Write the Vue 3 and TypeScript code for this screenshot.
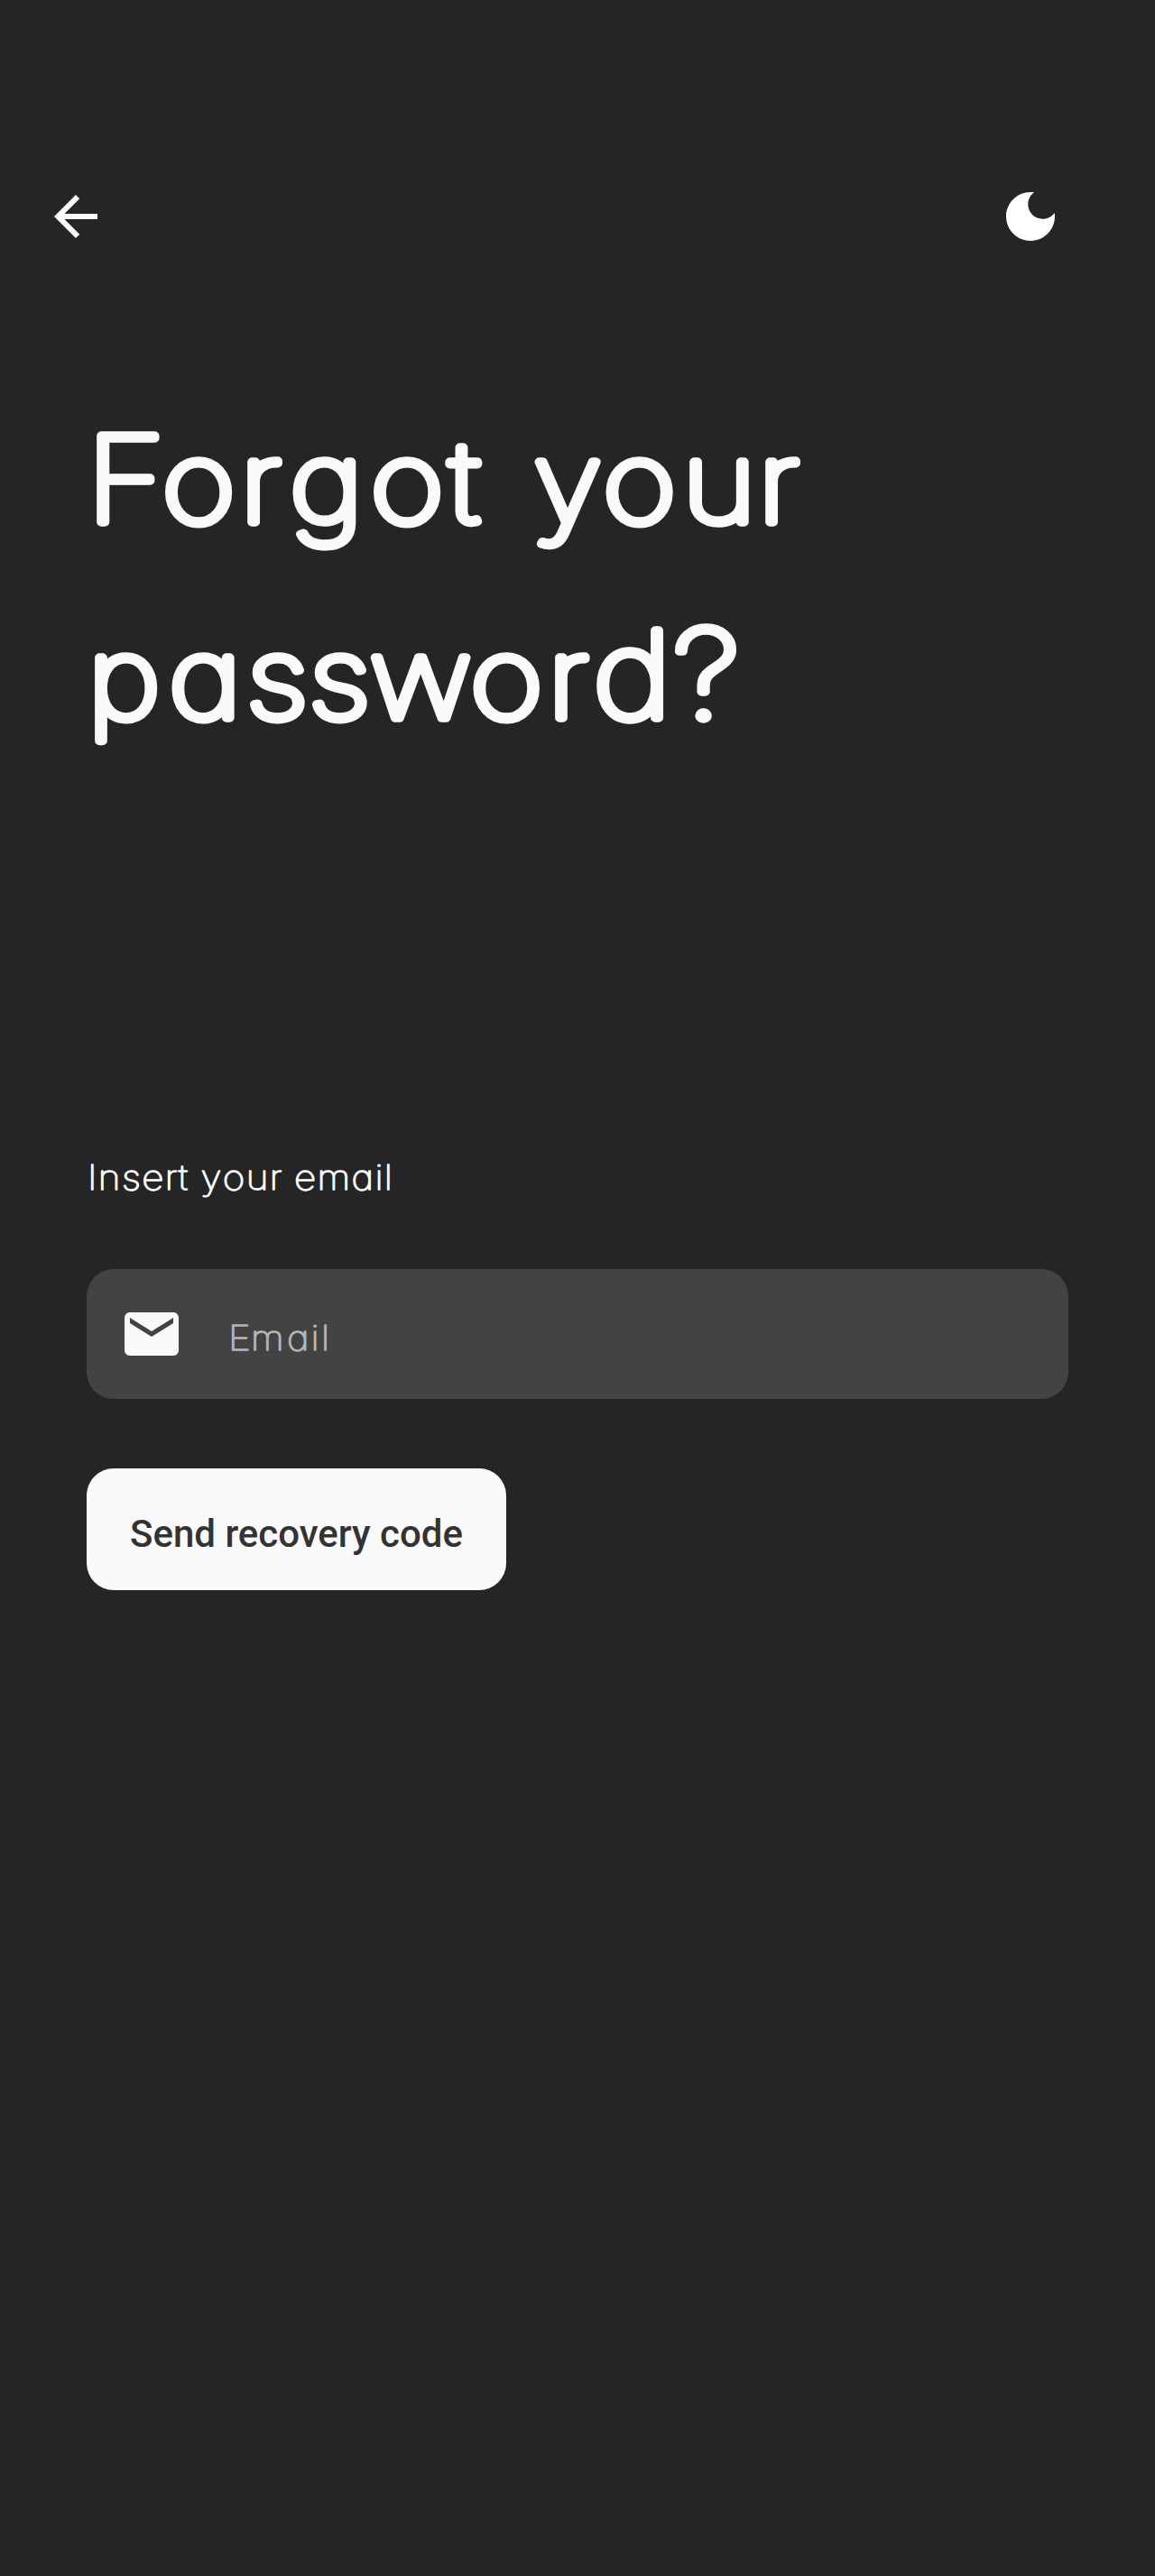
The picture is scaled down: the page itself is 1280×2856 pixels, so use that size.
<script setup lang="ts">
interface Run { text: string; size: number; xs: number[] }
interface Line { scale: number; y: number; runs: Run[] }
interface Word { text: string; x: number; width: number }

const titleLines: Line[] = [
  {
    scale: 1.14,
    y: 579,
    runs: [
      { text: 'F', size: 132, xs: [95.5] },
      { text: 'orgot your', size: 123, xs: [179.5, 266, 321, 410.5, 498, 550, 591, 668, 756, 840] },
    ],
  },
  {
    scale: 1.13,
    y: 796,
    runs: [
      { text: 'passwor', size: 123, xs: [97, 187, 273, 342, 410, 521, 607] },
      { text: 'd', size: 133, xs: [657] },
      { text: '?', size: 136, xs: [746] },
    ],
  },
]

const labelScale = 1.12
const labelWords: Word[] = [
  { text: 'Insert', x: 97, width: 111 },
  { text: 'your', x: 222.5, width: 90 },
  { text: 'email', x: 326, width: 109 },
]
const hintXs = [253, 278, 318, 344.5, 356]

const place = (xs: number[], scale: number): string =>
  xs.map((x) => (x / scale).toFixed(2)).join(' ')
const stretch = (scale: number): string => `scale(${scale} 1)`
</script>

<template>
  <main class="screen">
    <header class="bar">
      <svg class="icon" viewBox="0 0 24 24"><path d="M20 11H7.83l5.59-5.59L12 4l-8 8 8 8 1.41-1.41L7.83 13H20v-2z" /></svg>
      <svg class="icon moon" viewBox="0 0 24 24"><path d="M12 3c-4.97 0-9 4.03-9 9s4.03 9 9 9 9-4.03 9-9c0-.46-.04-.92-.1-1.36-.98 1.37-2.58 2.26-4.4 2.26-2.98 0-5.4-2.42-5.4-5.4 0-1.81.89-3.42 2.26-4.4C12.92 3.04 12.46 3 12 3z" /></svg>
    </header>
    <h1 class="title">
      <svg width="1280" height="440" viewBox="0 420 1280 440">
        <text v-for="l in titleLines" :key="l.y" class="rounded big" :transform="stretch(l.scale)" :y="l.y"><tspan v-for="r in l.runs" :key="r.text" :font-size="r.size" :x="place(r.xs, l.scale)">{{ r.text }}</tspan></text>
      </svg>
    </h1>
    <div class="label">
      <svg width="1280" height="80" viewBox="0 1270 1280 80">
        <text v-for="w in labelWords" :key="w.text" class="rounded small" :transform="stretch(labelScale)" :x="w.x / labelScale" y="1319.3" :textLength="w.width / labelScale">{{ w.text }}</text>
      </svg>
    </div>
    <div class="field">
      <svg class="icon" viewBox="0 0 24 24"><path d="M20 4H4c-1.1 0-1.99.9-1.99 2L2 18c0 1.1.9 2 2 2h16c1.1 0 2-.9 2-2V6c0-1.1-.9-2-2-2zm0 4l-8 5-8-5V6l8 5 8-5v2z" /></svg>
      <svg width="180" height="144" viewBox="240 1407 180 144">
        <text class="rounded small hint" :transform="stretch(labelScale)" :x="place(hintXs, labelScale)" y="1497">Email</text>
      </svg>
    </div>
    <button class="send">Send recovery code</button>
  </main>
</template>

<style>
body {
  margin: 0;
  background: #252525;
}
</style>

<style scoped>
.screen {
  display: flex;
  flex-direction: column;
  align-items: flex-start;
  box-sizing: border-box;
  width: 1280px;
  height: 2856px;
  padding-top: 204px;
  background: #252525;
  overflow: hidden;
}
svg {
  display: block;
  flex: none;
}
.icon {
  width: 72px;
  height: 72px;
  fill: #fafafa;
}
.moon {
  fill: #fff;
}
.bar {
  display: flex;
  justify-content: space-between;
  box-sizing: border-box;
  width: 100%;
  height: 72px;
  padding: 0 102px 0 48px;
}
.title {
  margin: 144px 0 0;
  font-weight: 100;
}
.label {
  margin-top: 410px;
}
.rounded {
  font-family: Inter, sans-serif;
  font-weight: 100;
  font-feature-settings: 'cv11' 1, 'kern' 0;
  fill: #fafafa;
  stroke: #fafafa;
  stroke-linejoin: round;
  stroke-linecap: round;
  vector-effect: non-scaling-stroke;
}
.rounded tspan {
  vector-effect: non-scaling-stroke;
}
.big {
  stroke-width: 10px;
}
.small {
  font-size: 37.8px;
  stroke-width: 1.7px;
}
.hint {
  fill: #b4b4b4;
  stroke: #b4b4b4;
}
.field {
  display: flex;
  align-items: center;
  gap: 36px;
  box-sizing: border-box;
  width: 1088px;
  height: 144px;
  margin: 57px 0 0 96px;
  padding-left: 36px;
  border-radius: 30px;
  background: #434343;
}
.send {
  width: 465px;
  height: 135px;
  margin: 77px 0 0 96px;
  padding: 11px 0 0;
  border: 0;
  border-radius: 30px;
  background: #fafafa;
  color: #333;
  font: 500 42px/48px Roboto, sans-serif;
  white-space: nowrap;
}
</style>
